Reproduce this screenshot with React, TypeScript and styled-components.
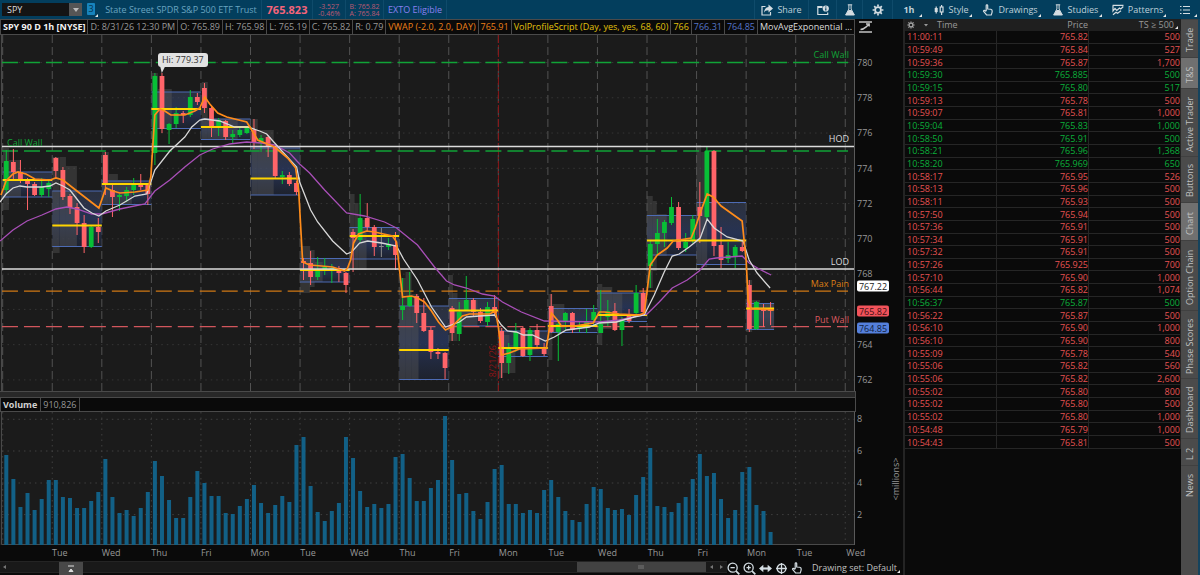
import React from "react";
import styled, { createGlobalStyle, css } from "styled-components";

const GlobalStyle = createGlobalStyle`
  * { box-sizing: border-box; }
  body { margin: 0; background: #0a0a0a; }
  body, button, input, table { font-family: "Open Sans", "Noto Sans", sans-serif; font-size: 9px; line-height: 12px; }
`;

const color = {
  bar: "#033e5d",
  barLine: "#0f4b6b",
  ink: "#c0c0c0",
  dim: "#989898",
  plot: "#1b1b1b",
  line: "#4a4a4a",
  up: "#08bf36",
  down: "#ff6469",
  upText: "#0bb03a",
  downText: "#e65252",
  orange: "#ff8c1a",
  green: "#10a337",
  yellow: "#ffd400",
};

/* ---------- data ---------- */

type Candle = [number, number, number, number, "u" | "d" | "n"];

const candles: Candle[] = [
  [150, 161, 190, 193, "u"], [149, 162, 172, 180, "d"], [160, 172, 180, 183, "d"], [178, 180, 184, 210, "d"], [182, 184, 195, 196, "d"], [178, 187, 195, 197, "u"], [179, 183, 189, 197, "u"],
  [157, 158, 171, 178, "d"], [167, 170, 197, 200, "d"], [194, 196, 208, 214, "d"], [203, 207, 223, 235, "d"], [215, 223, 247, 253, "d"], [226, 227, 247, 248, "u"], [218, 227, 232, 243, "d"],
  [152, 155, 185, 195, "d"], [183, 190, 197, 217, "d"], [194, 195, 197, 211, "u"], [187, 190, 196, 202, "u"], [178, 184, 190, 195, "u"], [174, 184, 187, 190, "d"], [183, 185, 194, 205, "d"],
  [73, 76, 153, 165, "u"], [73, 76, 129, 133, "d"], [123, 124, 130, 144, "u"], [107, 113, 124, 128, "u"], [111, 113, 115, 123, "d"], [90, 97, 115, 117, "u"], [93, 97, 102, 105, "d"],
  [83, 88, 108, 113, "d"], [106, 108, 126, 137, "d"], [118, 120, 127, 136, "u"], [120, 121, 137, 140, "d"], [130, 134, 137, 143, "u"], [128, 130, 135, 137, "u"], [126, 128, 133, 134, "u"],
  [119, 130, 143, 149, "d"], [135, 138, 143, 152, "u"], [135, 137, 147, 157, "d"], [146, 147, 176, 178, "d"], [171, 175, 177, 184, "u"], [172, 175, 184, 186, "d"], [181, 183, 192, 195, "d"],
  [258, 261, 263, 280, "d"], [251, 263, 277, 285, "d"], [257, 271, 277, 280, "u"], [258, 267, 269, 275, "u"], [264, 268, 270, 283, "u"], [266, 268, 273, 282, "d"], [272, 273, 285, 293, "d"],
  [229, 232, 238, 272, "d"], [194, 218, 240, 242, "u"], [203, 218, 227, 232, "d"], [225, 227, 247, 256, "d"], [228, 246, 247, 257, "n"], [238, 244, 247, 250, "u"], [232, 245, 255, 270, "d"],
  [278, 306, 310, 320, "u"], [272, 296, 306, 307, "u"], [294, 296, 313, 323, "d"], [298, 313, 331, 332, "d"], [327, 330, 352, 359, "d"], [348, 352, 354, 359, "d"], [352, 353, 368, 379, "d"],
  [306, 308, 333, 341, "d"], [302, 312, 334, 341, "u"], [276, 300, 310, 311, "u"], [298, 300, 312, 317, "d"], [308, 312, 321, 323, "d"], [302, 307, 322, 326, "u"], [295, 307, 313, 315, "d"],
  [328, 331, 363, 378, "d"], [343, 348, 363, 374, "u"], [323, 332, 348, 352, "u"], [327, 328, 356, 357, "d"], [328, 330, 355, 361, "u"], [324, 330, 345, 347, "d"], [343, 347, 354, 356, "d"],
  [294, 306, 332, 333, "d"], [320, 324, 332, 361, "u"], [312, 313, 322, 330, "u"], [312, 313, 330, 333, "d"], [321, 325, 329, 332, "u"], [309, 322, 326, 333, "u"], [305, 312, 320, 326, "u"],
  [290, 324, 333, 333, "u"], [300, 311, 317, 326, "u"], [303, 311, 330, 331, "d"], [317, 320, 330, 346, "u"], [309, 316, 321, 323, "d"], [285, 293, 313, 314, "u"], [288, 293, 312, 314, "d"],
  [240, 244, 266, 288, "u"], [219, 233, 244, 255, "u"], [220, 222, 233, 247, "u"], [197, 207, 223, 225, "u"], [202, 207, 248, 250, "d"], [233, 242, 248, 252, "u"], [215, 219, 240, 243, "u"],
  [182, 207, 216, 243, "d"], [146, 151, 217, 220, "u"], [150, 151, 246, 256, "d"], [227, 245, 260, 268, "d"], [242, 255, 259, 263, "u"], [245, 247, 256, 268, "u"], [242, 247, 251, 252, "d"],
  [280, 285, 329, 332, "d"], [301, 302, 329, 330, "u"], [304, 309, 311, 327, "d"], [302, 309, 311, 325, "d"],
];

/* value-area high, value-area low, point of control */
const areas: [number, number, number][] = [
  [172, 197, 180], [191, 246.5, 225.5], [181, 204.5, 184], [92, 128.5, 109], [119, 139.5, 127], [148, 195, 178.5],
  [258.5, 282, 270], [227.5, 259, 236], [306, 379.5, 350], [298.5, 326, 310.5], [331, 356.5, 348], [308.5, 332.5, 326],
  [293, 321.5, 315], [215.5, 255, 240.5], [202.5, 264.5, 240.5], [303.5, 329.5, 308.5],
];

const profile: [number, number, number, number][] = [
  [3, 148, 6, 62], [9, 160, 12, 37], [52.7, 157, 7, 96], [60, 157, 6, 90], [66, 166, 11, 81],
  [102, 152, 7, 53], [109, 174, 9, 31], [118, 180, 14, 24], [152, 73, 6, 72], [158, 89, 14, 40],
  [202, 82, 6, 58], [208, 119, 30, 20], [252, 119, 6, 76], [258, 130, 16, 65], [300.5, 246, 10, 47],
  [310, 250, 5, 37], [315, 262, 8, 20], [350, 194, 5, 76], [355, 203, 4, 67], [359, 220, 8, 50],
  [400, 278, 6, 101], [406, 272, 6, 107], [412, 294, 7, 85], [449.5, 275, 4, 66], [453, 293, 5, 48],
  [458, 300, 20, 27], [499.5, 328, 4, 50], [503, 335, 7, 38], [510, 345, 6, 28], [549, 294, 4, 66],
  [553, 304, 12, 28], [598, 284, 5, 61], [603, 287, 10, 42], [613, 293, 10, 34], [647.5, 196, 6, 92],
  [653.5, 201, 4, 70], [657.5, 214, 10, 42], [697, 145, 5, 120], [702, 152, 6, 115], [747, 280, 6, 52],
  [753, 300, 8, 30], [761, 303, 14, 27],
];

const vwap = "1,195 6,181 13,174 18,172 26,174 35,179 50,180 56,178 63,180 77,191 99,208 106,188 113,191 120,193 135,192 148,190 151,177 155,115 160,109 165,111 171,115 185,115 195,111 200,108 205,97 210,104 218,113 227,117 247,122 252,130 258,140 275,147 288,158 296,168 299,190 303,262 310,265 322,266 333,267 345,271 348,268 351,260 354,243 359,234 367,231 375,232 393,236 397,242 400,270 403,297 412,296 418,298 425,302 432,311 439,322 446,330 452,327 463,316 470,314 490,314 496,311 499,327 502,355 510,353 520,349 547,348 549,335 552,313 558,320 562,326 575,326 594,323 600,312 605,312 620,314 640,315 645,313 648,290 651,265 658,255 668,248 674,241 692,238 696,228 701,213 708,194 714,197 722,206 743,221 747,260 749,300 752,309 760,309 775,310";
const fastAverage = "0,202 6,194 13,188 20,186 27,187 42,187 50,186 56,183 63,186 70,190 77,199 84,208 92,213 99,216 106,211 120,205 135,196 147,194 155,170 170,151 185,137 192,127 200,120 205,119 220,121 235,127 248,127 260,131 267,134 275,143 284,153 297,167 300,182 311,210 318,222 333,241 347,254 352,252 360,243 368,241 382,243 397,246 404,259 418,280 432,307 446,327 460,322 467,317 480,316 495,315 502,325 508,331 517,332 524,335 533,335 546,341 555,337 567,330 590,327 600,323 617,322 635,317 645,315 655,295 665,272 673,256 680,254 690,247 701,238 708,219 715,228 728,237 744,241 750,260 758,273 771,288";
const slowAverage = "0,241 13,230 27,221 42,215 56,209 67,207 77,209 92,214 102,214 120,209 145,204 155,191 170,180 185,167 200,155 213,149 230,144 247,142 262,143 275,145 290,153 300,164 310,173 325,190 347,213 365,216 385,222 397,228 418,245 435,267 447,281 455,285 467,288 483,294 495,296 503,302 522,312 545,321 600,322 620,320 648,314 660,302 673,288 688,280 700,271 710,259 717,258 730,257 743,256 750,263 760,269 772,275";

const volumes = [
  90, 66, 38, 52, 35, 46, 65, 65, 48, 47, 37, 37, 44, 53, 86, 48, 32, 35, 29, 37, 53, 84, 69, 45, 27, 27, 48, 74,
  62, 49, 49, 32, 31, 39, 46, 60, 42, 32, 40, 49, 43, 100, 108, 59, 33, 24, 34, 42, 108, 87, 54, 38, 41, 37, 41, 88,
  91, 67, 44, 44, 57, 65, 129, 85, 51, 52, 34, 26, 43, 76, 80, 41, 41, 32, 35, 32, 55, 65, 48, 34, 25, 23, 41, 58,
  56, 37, 35, 36, 30, 50, 68, 97, 39, 38, 33, 42, 48, 66, 91, 69, 72, 46, 27, 35, 73, 78, 40, 34, 13,
];

const days = ["Tue", "Wed", "Thu", "Fri", "Mon", "Tue", "Wed", "Thu", "Fri", "Mon", "Tue", "Wed", "Thu", "Fri", "Mon", "Tue", "Wed"];

const legend: { text: string; tint: string; strong?: boolean }[] = [
  { text: "SPY 90 D 1h [NYSE]", tint: "#f2f2f2", strong: true },
  { text: "D: 8/31/26 12:30 PM", tint: color.dim },
  { text: "O: 765.89", tint: color.dim },
  { text: "H: 765.98", tint: color.dim },
  { text: "L: 765.19", tint: color.dim },
  { text: "C: 765.82", tint: color.dim },
  { text: "R: 0.79", tint: color.dim },
  { text: "VWAP (-2.0, 2.0, DAY)", tint: "#ec8018" },
  { text: "765.91", tint: "#ec8018" },
  { text: "VolProfileScript (Day, yes, yes, 68, 60)", tint: "#e2c20c" },
  { text: "766", tint: "#e2c20c" },
  { text: "766.31", tint: "#5575c8" },
  { text: "764.85", tint: "#5575c8" },
  { text: "MovAvgExponential ...", tint: "#dcdcdc" },
];

const trades: [string, string, string, ("u")?][] = [
  ["11:00:11", "765.82", "500"], ["10:59:49", "765.84", "527"], ["10:59:36", "765.87", "1,700"],
  ["10:59:30", "765.885", "500", "u"], ["10:59:15", "765.80", "517", "u"], ["10:59:13", "765.78", "500"],
  ["10:59:07", "765.81", "1,000"], ["10:59:04", "765.83", "1,000", "u"], ["10:58:50", "765.91", "500", "u"],
  ["10:58:21", "765.96", "1,368", "u"], ["10:58:20", "765.969", "650", "u"], ["10:58:17", "765.95", "526"],
  ["10:58:13", "765.96", "500"], ["10:58:11", "765.93", "500"], ["10:57:50", "765.94", "500"],
  ["10:57:36", "765.91", "500"], ["10:57:34", "765.91", "500"], ["10:57:32", "765.91", "500"],
  ["10:57:26", "765.925", "700"], ["10:57:10", "765.90", "1,000"], ["10:56:44", "765.82", "1,074"],
  ["10:56:37", "765.87", "500", "u"], ["10:56:22", "765.87", "500"], ["10:56:10", "765.90", "1,000"],
  ["10:56:10", "765.90", "800"], ["10:55:09", "765.78", "540"], ["10:55:06", "765.82", "560"],
  ["10:55:06", "765.82", "2,600"], ["10:55:02", "765.80", "800"], ["10:55:02", "765.80", "500"],
  ["10:55:02", "765.80", "1,000"], ["10:54:48", "765.79", "1,000"], ["10:54:43", "765.81", "500"],
];

const sideTabs: { name: string; size: number; on?: boolean }[] = [
  { name: "Trade", size: 38 }, { name: "T&S", size: 31, on: true }, { name: "Active Trader", size: 68 },
  { name: "Buttons", size: 46 }, { name: "Chart", size: 38, on: true }, { name: "Option Chain", size: 70 },
  { name: "Phase Scores", size: 68 }, { name: "Dashboard", size: 60 }, { name: "L 2", size: 27 }, { name: "News", size: 37 },
];

/* ---------- page frame ---------- */

const Page = styled.div`
  display: flex;
  flex-direction: column;
  min-width: 1120px;
  min-height: 100vh;
  background: #0a0a0a;
  color: ${color.ink};
`;
const Main = styled.main`
  display: flex;
  flex: 1;
`;
const ChartColumn = styled.section`
  display: flex;
  flex-direction: column;
  flex: 1;
  min-width: 0;
`;

/* ---------- top bar ---------- */

const TopBar = styled.header`
  display: flex;
  align-items: stretch;
  height: 19px;
  background: ${color.bar};
`;
const SymbolBox = styled.div`
  display: flex;
  width: 80px;
  height: 13px;
  margin: 3px 5px 0 2px;
  background: #141414;
`;
const SymbolInput = styled.input`
  flex: 1;
  min-width: 0;
  border: 0;
  padding: 0 5px;
  background: transparent;
  color: #dcdcdc;
  outline: none;
`;
const DropButton = styled.button`
  display: flex;
  align-items: center;
  justify-content: center;
  width: 13px;
  border: 0;
  padding: 0;
  background: #555;
`;
const LinkBadge = styled.button`
  width: 8px;
  height: 12px;
  border: 0;
  padding: 0;
  border-radius: 1px;
  background: #1784bd;
  color: #06324b;
`;
const LinkGroup = styled.div`
  position: relative;
  width: 14px;
  padding-top: 3px;
`;
const Quote = styled.div<{ $w: number; $tint: string }>`
  display: flex;
  flex-direction: column;
  justify-content: center;
  align-items: center;
  width: ${(p) => p.$w}px;
  border-right: 1px solid ${color.barLine};
  color: ${(p) => p.$tint};
  white-space: nowrap;
`;
const LastPrice = styled.strong`
  font-size: 11px;
  line-height: 16px;
`;
const Small = styled.span`
  font-size: 7px;
  line-height: 7px;
`;
const Tools = styled.nav`
  display: flex;
  margin-left: auto;
`;
const Tool = styled.button<{ $w: number; $line?: boolean }>`
  position: relative;
  display: flex;
  align-items: center;
  justify-content: center;
  gap: 4px;
  width: ${(p) => p.$w}px;
  border: 0;
  border-left: 1px solid ${(p) => (p.$line ? color.barLine : "transparent")};
  padding: 0;
  background: transparent;
  color: #bfd0d9;
  white-space: nowrap;
`;
const Corner = styled.i`
  position: absolute;
  right: 3px;
  bottom: 2px;
  border: solid transparent;
  border-width: 0 0 3px 3px;
  border-bottom-color: #e8e8e8;
`;

/* ---------- chart ---------- */

const headerCells = css`
  display: flex;
  background: #0a0a0a;
  border: solid ${color.line};
  border-width: 1px 0 1px 1px;
  white-space: nowrap;
`;
const LegendRow = styled.div`
  display: flex;
  height: 16px;
`;
const LegendCells = styled.div`
  ${headerCells}
  flex: 1;
  min-width: 0;
  overflow: hidden;
`;
const LegendCell = styled.span<{ $tint: string; $strong?: boolean }>`
  flex: 1 0 auto;
  padding: 0 1px 0 2px;
  border-right: 1px solid ${color.line};
  color: ${(p) => p.$tint};
  font-weight: ${(p) => (p.$strong ? 700 : 400)};
  line-height: 14px;
`;
const ScaleButton = styled.button`
  display: flex;
  align-items: center;
  width: 48px;
  border: 0;
  padding: 0 4px;
  background: transparent;
`;
const PlotRow = styled.div<{ $grow: number }>`
  display: flex;
  flex: ${(p) => p.$grow} 1 0;
  min-height: ${(p) => Math.round(p.$grow / 2)}px;
`;
const Plot = styled.div`
  position: relative;
  flex: 1;
  min-width: 0;
  background: ${color.plot};
  border-right: 1px solid #5a5a5a;
`;
const Canvas = styled.svg`
  position: absolute;
  inset: 0;
  width: 100%;
  height: 100%;
`;
const LineLabel = styled.span<{ $y: number; $tint: string; $left?: boolean }>`
  position: absolute;
  top: ${(p) => ((p.$y - 35) / 356) * 100}%;
  ${(p) => (p.$left ? "left: 7px;" : "right: 5px;")}
  transform: translateY(-50%);
  color: ${(p) => p.$tint};
`;
const HighBubble = styled.span`
  position: absolute;
  left: 18.5%;
  top: 5%;
  padding: 1px 4px;
  border-radius: 3px;
  background: #e2e2e2;
  color: #333;
`;
const DateMark = styled.span`
  position: absolute;
  left: 57%;
  top: 87%;
  writing-mode: vertical-rl;
  transform: rotate(180deg);
  color: #8c1518;
`;
const Axis = styled.div`
  position: relative;
  display: flex;
  flex-direction: column;
  justify-content: space-between;
  width: 48px;
  padding: 22px 0 5px 2px;
  color: ${color.dim};
`;
const VolumeAxis = styled(Axis)`
  padding: 1px 0 24px 2px;
`;
const Tick = styled.span`
  height: 12px;
`;
const PriceTag = styled.span<{ $y: number; $bg: string; $ink: string }>`
  position: absolute;
  left: 2px;
  top: ${(p) => ((p.$y - 35) / 356) * 100}%;
  transform: translateY(-50%);
  width: 32px;
  border-radius: 2px;
  background: ${(p) => p.$bg};
  color: ${(p) => p.$ink};
  line-height: 11px;
  text-align: center;
`;
const Unit = styled.span`
  position: absolute;
  right: 1px;
  top: 50%;
  writing-mode: vertical-rl;
  transform: translateY(-50%) rotate(180deg);
`;
const Splitter = styled.div`
  height: 6px;
  margin-right: 47px;
  border: solid ${color.line};
  border-width: 1px 1px 0 0;
  background: #282828;
`;
const VolumeHeader = styled.div`
  ${headerCells}
  height: 15px;
  margin-right: 47px;
  border-right-width: 1px;
`;
const VolumeCell = styled(LegendCell)`
  flex-grow: 0;
  padding: 0 3px 0 2px;
  line-height: 13px;
`;
const TimeAxis = styled.div`
  display: grid;
  grid-template-columns: repeat(17, minmax(0, 1fr));
  height: 16px;
  padding: 2px 7px 0 52px;
  color: ${color.dim};
`;
const BottomBar = styled.div`
  display: flex;
  height: 14px;
`;
const Scroller = styled.div`
  display: flex;
  flex: 1;
  height: 12px;
  border: solid #242424;
  border-width: 1px 0;
  background: #191919;
`;
const ScrollButton = styled.button<{ $w: number; $lit?: boolean }>`
  display: flex;
  flex: none;
  align-items: center;
  justify-content: center;
  width: ${(p) => p.$w}px;
  height: ${(p) => (p.$lit ? 14 : 10)}px;
  border: 0;
  padding: 0;
  background: ${(p) => (p.$lit ? "#484848" : "transparent")};
`;
const Spacer = styled.div<{ $grow: number }>`
  flex: ${(p) => p.$grow};
`;
const Thumb = styled.div`
  display: flex;
  align-items: center;
  justify-content: center;
  flex: 129;
  background: #424242;
`;
const ZoomTools = styled.div`
  display: flex;
  align-items: center;
  gap: 3px;
`;
const ZoomButton = styled.button`
  display: flex;
  width: 13px;
  border: 0;
  padding: 0;
  background: transparent;
`;
const DrawingSet = styled.button`
  position: relative;
  width: 99px;
  border: 0;
  padding: 0 0 0 8px;
  background: transparent;
  color: ${color.ink};
  text-align: left;
  white-space: nowrap;
`;

/* ---------- time & sales ---------- */

const Sales = styled.section`
  width: 278px;
  border-left: 2px solid #242424;
`;
const SalesTable = styled.table`
  width: 100%;
  height: 430px;
  table-layout: fixed;
  border-collapse: separate;
  border-spacing: 0;
`;
const HeadCell = styled.th<{ $right?: number }>`
  position: relative;
  height: 12px;
  padding: 0 ${(p) => p.$right ?? 0}px 0 0;
  background: #1f1f1f;
  color: ${color.dim};
  font-weight: 400;
  text-align: right;
`;
const HeadGroup = styled.span`
  display: flex;
  align-items: center;
  gap: 8px;
  padding-left: 2px;
`;
const Row = styled.tr<{ $up: boolean }>`
  color: ${(p) => (p.$up ? color.upText : color.downText)};
`;
const Cell = styled.td`
  padding: 0 0 0 2px;
  border: solid #262626;
  border-width: 0 1px 1px 0;
  line-height: 11px;
  text-align: right;
  &:first-child { text-align: left; }
`;

/* ---------- side tabs ---------- */

const SideTabs = styled.nav`
  display: flex;
  flex-direction: column;
  width: 19px;
  border-right: 2px solid #15435d;
  background: #4b4b4b;
`;
const SideTab = styled.button<{ $h: number; $on?: boolean }>`
  height: ${(p) => p.$h}px;
  border: 0;
  border-bottom: 1px solid #404040;
  padding: 0 0 3px;
  background: ${(p) => (p.$on ? "#707070" : "#4b4b4b")};
  color: #c0c0c0;
  line-height: 17px;
  writing-mode: vertical-rl;
  transform: rotate(180deg);
  white-space: nowrap;
`;

/* ---------- icons ---------- */

const Icon = ({ size = 12, children }: { size?: number; children: React.ReactNode }) => (
  <svg width={size} height={size} viewBox="0 0 12 12" fill="none" stroke="#d4dde2" strokeWidth="1.2" aria-hidden="true">
    {children}
  </svg>
);
const ShareIcon = () => (
  <Icon>
    <path d="M4.500 2.500H1v8.500h8.500V8" />
    <path d="M7.500 .6l4.500 4-4.500 4V6.200C5 6.200 3.800 7 3 8.700 3.200 5.300 4.800 3.200 7.500 3z" fill="#d4dde2" stroke="none" />
  </Icon>
);
const PanelIcon = () => (
  <Icon>
    <path d="M5.500 2.500H.8v8h9.900V8.500M1 3.500h4.500" />
    <circle cx="8.800" cy="4.500" r="3.100" fill="#d4dde2" stroke="none" />
    <path d="M8.800 2.600v1M8.800 4.200v2.400" stroke={color.bar} />
  </Icon>
);
const FlaskIcon = () => (
  <Icon>
    <path d="M3.800.8h4.400M4.900 1v4L1.600 11h8.800L7.100 5V1" strokeWidth="1" />
    <path d="M4.600 6h2.800l3 5H1.600z" fill="#d4dde2" stroke="none" />
  </Icon>
);
const GearIcon = ({ size = 12, tint = "#d4dde2" }: { size?: number; tint?: string }) => (
  <Icon size={size}>
    <circle cx="6" cy="6" r="2.900" stroke={tint} strokeWidth="1.800" />
    <path d="M6 .6v2M6 9.400v2M.6 6h2M9.400 6h2M2.200 2.200l1.400 1.400M8.400 8.400l1.400 1.400M2.200 9.800l1.400-1.400M8.400 3.600l1.400-1.400" stroke={tint} strokeWidth="1.700" />
  </Icon>
);
const StyleIcon = () => (
  <Icon>
    <path d="M3.200 2.500v7M8.600 1v10" />
    <rect x="1.700" y="4" width="3" height="4" fill="#d4dde2" stroke="none" />
    <rect x="7.200" y="3" width="2.800" height="5" fill={color.bar} />
  </Icon>
);
const HandIcon = () => (
  <Icon>
    <path d="M4.200 7V1.600c0-1 1.500-1 1.500 0V5c2 0 4.500.3 4.500 2 0 1.800-.6 2.600-1 4H4.600C3.800 9.600 2.400 8.500 1.500 7.200c.2-1.200 1.600-.9 2.700.3" />
  </Icon>
);
const PatternsIcon = () => (
  <Icon>
    <path d="M.6 1.300H11.500M1 1.500v5.500l2-2.500 1.800 2L7.500 4l1.300 1 2.500-2.500M1 10.800l3-2.600 1.600 1L9 6.800" />
  </Icon>
);
const ListIcon = () => (
  <Icon>
    <path d="M1 2.500h1.500M4 2.500h7M1 6h1.500M4 6h7M1 9.500h1.500M4 9.500h7" />
  </Icon>
);
const Magnifier = ({ plus }: { plus?: boolean }) => (
  <Icon size={13}>
    <circle cx="5.200" cy="5.200" r="4.200" />
    <path d="M8.400 8.400l3 3" strokeWidth="1.600" />
    <path d={plus ? "M3.200 5.200h4M5.200 3.200v4" : "M3.200 5.200h4"} />
  </Icon>
);
const Caret = ({ d, tint = "#999" }: { d: string; tint?: string }) => (
  <svg width="6" height="6" viewBox="0 0 6 6" aria-hidden="true"><path d={d} fill={tint} /></svg>
);

/* ---------- drawings ---------- */

const dayX = (d: number) => 2.7 + d * 49.62;
const barX = (i: number) => 6.3 + i * 7.085;
const spanOf = (d: number) => (d === 15 ? 28 : 49.6);
const tone = { u: color.up, d: color.down, n: "#8c8c8c" };

const PriceCanvas = () => (
  <Canvas viewBox="0 35 855 356" preserveAspectRatio="none" role="img" aria-label="SPY price chart">
    <defs>
      <linearGradient id="area" x1="0" y1="0" x2="0" y2="1">
        <stop offset="0" stopColor="#3c4660" stopOpacity=".5" />
        <stop offset=".5" stopColor="#2a3a66" stopOpacity=".75" />
        <stop offset="1" stopColor="#20273a" stopOpacity=".6" />
      </linearGradient>
    </defs>
    {Array.from({ length: 10 }, (_, k) => (
      <path key={k} d={`M2 ${62.5 + k * 35.27}H855`} stroke="#363636" strokeDasharray="1.500 4" />
    ))}
    {Array.from({ length: 18 }, (_, d) => (
      <path key={d} d={`M${dayX(d)} 35V391`} stroke="#525252" strokeDasharray="8 4" />
    ))}
    <path d="M1.500 35V391" stroke={color.line} />
    {areas.map(([top, low], d) => (
      <rect key={d} x={dayX(d)} y={top} width={spanOf(d)} height={low - top} fill="url(#area)" />
    ))}
    {profile.map(([x, y, w, h], k) => (
      <rect key={k} x={x} y={y} width={w} height={h} fill="#585858" opacity=".42" />
    ))}
    {areas.map(([top, low], d) => (
      <path key={d} d={`M${dayX(d)} ${top}h${spanOf(d)}M${dayX(d)} ${low}h${spanOf(d)}`} stroke="#4d6bb5" />
    ))}
    <path d="M499 35V391" stroke="#8c1518" strokeDasharray="8 2 2 2" />
    <path d="M2 62.500H849M2 151H849" stroke={color.green} strokeWidth="1.300" strokeDasharray="16 6" />
    <path d="M2 291.200H849" stroke="#cf7814" strokeWidth="1.300" strokeDasharray="16 6" />
    <path d="M2 326.700H849" stroke="#d2565c" strokeWidth="1.300" strokeDasharray="16 6" />
    {candles.map(([high, top, bottom, low, kind], i) => (
      <g key={i} fill={tone[kind]}>
        <rect x={barX(i) - 0.5} y={high} width="1" height={low - high} />
        <rect x={barX(i) - 2.4} y={top} width="4.800" height={bottom - top} />
      </g>
    ))}
    {areas.map(([, , poc], d) => (
      <path key={d} d={`M${dayX(d)} ${poc}h${spanOf(d)}`} stroke={color.yellow} strokeWidth="2" />
    ))}
    <path d="M2 146.500H855M2 269H855" stroke="#dcdcdc" strokeWidth="1.300" />
    <polyline points={slowAverage} fill="none" stroke="#a94fb8" strokeWidth="1.300" />
    <polyline points={fastAverage} fill="none" stroke="#d8d8d8" strokeWidth="1.300" />
    <polyline points={vwap} fill="none" stroke={color.orange} strokeWidth="1.700" />
    <path d="M160 65h6l-4 8z" fill="#e2e2e2" />
  </Canvas>
);

const VolumeCanvas = () => (
  <Canvas viewBox="0 412 855 133" preserveAspectRatio="none" role="img" aria-label="Volume chart">
    {[419.3, 451, 483, 514.6].map((y) => (
      <path key={y} d={`M2 ${y}H855`} stroke="#404040" strokeDasharray="1.500 4" />
    ))}
    {Array.from({ length: 18 }, (_, d) => (
      <path key={d} d={`M${dayX(d)} 412V545`} stroke="#404040" strokeDasharray="1.500 4" />
    ))}
    <path d="M1.500 412V544.500H855" fill="none" stroke={color.line} />
    {volumes.map((h, i) => (
      <rect key={i} x={barX(i) - 2} y={545 - h} width="4" height={h} fill="#126086" />
    ))}
  </Canvas>
);

/* ---------- app ---------- */

export default function App() {
  return (
    <Page>
      <GlobalStyle />
      <TopBar>
        <SymbolBox>
          <SymbolInput aria-label="Symbol" defaultValue="SPY" />
          <DropButton aria-label="Symbol list"><Caret d="M0 1h6L3 5z" tint="#bbb" /></DropButton>
        </SymbolBox>
        <LinkGroup>
          <LinkBadge aria-label="Link group 3">3</LinkBadge>
          <Corner />
        </LinkGroup>
        <Quote $w={161} $tint="#69a4c0">State Street SPDR S&amp;P 500 ETF Trust</Quote>
        <Quote $w={51} $tint="#f4647a"><LastPrice>765.823</LastPrice></Quote>
        <Quote $w={33} $tint="#bd5a74"><Small>-3.527</Small><Small>-0.46%</Small></Quote>
        <Quote $w={38} $tint="#bd5a74"><Small>B: 765.82</Small><Small>A: 765.84</Small></Quote>
        <Quote $w={63} $tint="#8a80f0">EXTO Eligible</Quote>
        <Tools>
          <Tool $w={54} $line><ShareIcon />Share</Tool>
          <Tool $w={28} $line aria-label="Detach"><PanelIcon /></Tool>
          <Tool $w={26} $line aria-label="Lab"><FlaskIcon /></Tool>
          <Tool $w={30} $line aria-label="Settings"><GearIcon /></Tool>
          <Tool $w={33} $line><strong>1h</strong><Corner /></Tool>
          <Tool $w={50}><StyleIcon />Style<Corner /></Tool>
          <Tool $w={69}><HandIcon />Drawings<Corner /></Tool>
          <Tool $w={61}><FlaskIcon />Studies<Corner /></Tool>
          <Tool $w={64}><PatternsIcon />Patterns<Corner /></Tool>
          <Tool $w={31} aria-label="Menu"><ListIcon /><Corner /></Tool>
        </Tools>
      </TopBar>
      <Main>
        <ChartColumn>
          <LegendRow>
            <LegendCells>
              {legend.map((c) => (
                <LegendCell key={c.text} $tint={c.tint} $strong={c.strong}>{c.text}</LegendCell>
              ))}
            </LegendCells>
            <ScaleButton aria-label="Fit scale">
              <svg width="13" height="12" viewBox="0 0 13 12" fill="none" stroke="#c4c4c4" strokeWidth="1.400" aria-hidden="true">
                <path d="M0 1h13M0 11h13M1.500 8.500c4 0 4.500-2 8.500-5M7 3h3.200v2.500" />
              </svg>
            </ScaleButton>
          </LegendRow>
          <PlotRow $grow={356}>
            <Plot>
              <PriceCanvas />
              <HighBubble>Hi: 779.37</HighBubble>
              <LineLabel $y={55} $tint={color.green}>Call Wall</LineLabel>
              <LineLabel $y={143} $tint={color.green} $left>Call Wall</LineLabel>
              <LineLabel $y={139} $tint="#dcdcdc">HOD</LineLabel>
              <LineLabel $y={262} $tint="#dcdcdc">LOD</LineLabel>
              <LineLabel $y={284} $tint="#dc7e16">Max Pain</LineLabel>
              <LineLabel $y={320} $tint="#dc5a60">Put Wall</LineLabel>
              <DateMark>8/21/26</DateMark>
            </Plot>
            <Axis>
              {["780", "778", "776", "774", "772", "770", "768", "", "764", "762"].map((t, i) => <Tick key={i}>{t}</Tick>)}
              <PriceTag $y={286} $bg="#fff" $ink="#222">767.22</PriceTag>
              <PriceTag $y={311} $bg="#f2525a" $ink="#3c1013">765.82</PriceTag>
              <PriceTag $y={328} $bg="#5580dc" $ink="#101d3c">764.85</PriceTag>
            </Axis>
          </PlotRow>
          <Splitter />
          <VolumeHeader>
            <VolumeCell $tint="#d0d0d0" $strong>Volume</VolumeCell>
            <VolumeCell $tint={color.dim}>910,826</VolumeCell>
          </VolumeHeader>
          <PlotRow $grow={133}>
            <Plot><VolumeCanvas /></Plot>
            <VolumeAxis>
              {["8", "6", "4", "2"].map((t) => <Tick key={t}>{t}</Tick>)}
              <Unit>&lt;millions&gt;</Unit>
            </VolumeAxis>
          </PlotRow>
          <TimeAxis>{days.map((d, i) => <span key={i}>{d}</span>)}</TimeAxis>
          <BottomBar>
            <Scroller>
              <ScrollButton $w={8} aria-label="Scroll left"><Caret d="M5 1v4L2 3z" tint="#777" /></ScrollButton>
              <Spacer $grow={51} />
              <ScrollButton $w={24} $lit aria-label="Collapse">
                <svg width="8" height="8" viewBox="0 0 8 8" aria-hidden="true"><path d="M1 1h6M2 6.500h4L4 4z" fill="#ddd" stroke="#ddd" /></svg>
              </ScrollButton>
              <Spacer $grow={493} />
              <Thumb><svg width="6" height="4" viewBox="0 0 6 4" aria-hidden="true"><path d="M1 0v4M3 0v4M5 0v4" stroke="#777" /></svg></Thumb>
              <ScrollButton $w={10} aria-label="Step left"><Caret d="M5 1v4L2 3z" tint="#777" /></ScrollButton>
              <ScrollButton $w={11} aria-label="Step right"><Caret d="M1 1v4l3-2z" tint="#777" /></ScrollButton>
            </Scroller>
            <ZoomTools>
              <ZoomButton aria-label="Zoom out"><Magnifier /></ZoomButton>
              <ZoomButton aria-label="Zoom in"><Magnifier plus /></ZoomButton>
              <ZoomButton aria-label="Pan"><Icon size={13}><path d="M3 6h6" strokeWidth="2" /><path d="M0 6l4-3.500v7zM12 6L8 2.500v7z" fill="#d4dde2" stroke="none" /></Icon></ZoomButton>
              <ZoomButton aria-label="Crosshair"><Icon size={13}><circle cx="6" cy="6" r="4" /><path d="M6 1v10M1 6h10" /></Icon></ZoomButton>
              <ZoomButton aria-label="Pointer"><HandIcon /></ZoomButton>
            </ZoomTools>
            <DrawingSet>Drawing set: Default<Corner /></DrawingSet>
          </BottomBar>
        </ChartColumn>
        <Sales>
          <SalesTable>
            <thead>
              <tr>
                <HeadCell scope="col"><HeadGroup><GearIcon size={8} tint="#aaa" /><Caret d="M1 2h4L3 4.500z" />Time</HeadGroup></HeadCell>
                <HeadCell scope="col" $right={1}>Price</HeadCell>
                <HeadCell scope="col" $right={7}>TS ≥ 500<Corner /></HeadCell>
              </tr>
            </thead>
            <tbody>
              {trades.map(([time, price, size, dir], i) => (
                <Row key={i} $up={dir === "u"}>
                  <Cell>{time}</Cell>
                  <Cell>{price}</Cell>
                  <Cell>{size}</Cell>
                </Row>
              ))}
            </tbody>
          </SalesTable>
        </Sales>
        <SideTabs>
          {sideTabs.map((t) => <SideTab key={t.name} $h={t.size} $on={t.on}>{t.name}</SideTab>)}
        </SideTabs>
      </Main>
    </Page>
  );
}
